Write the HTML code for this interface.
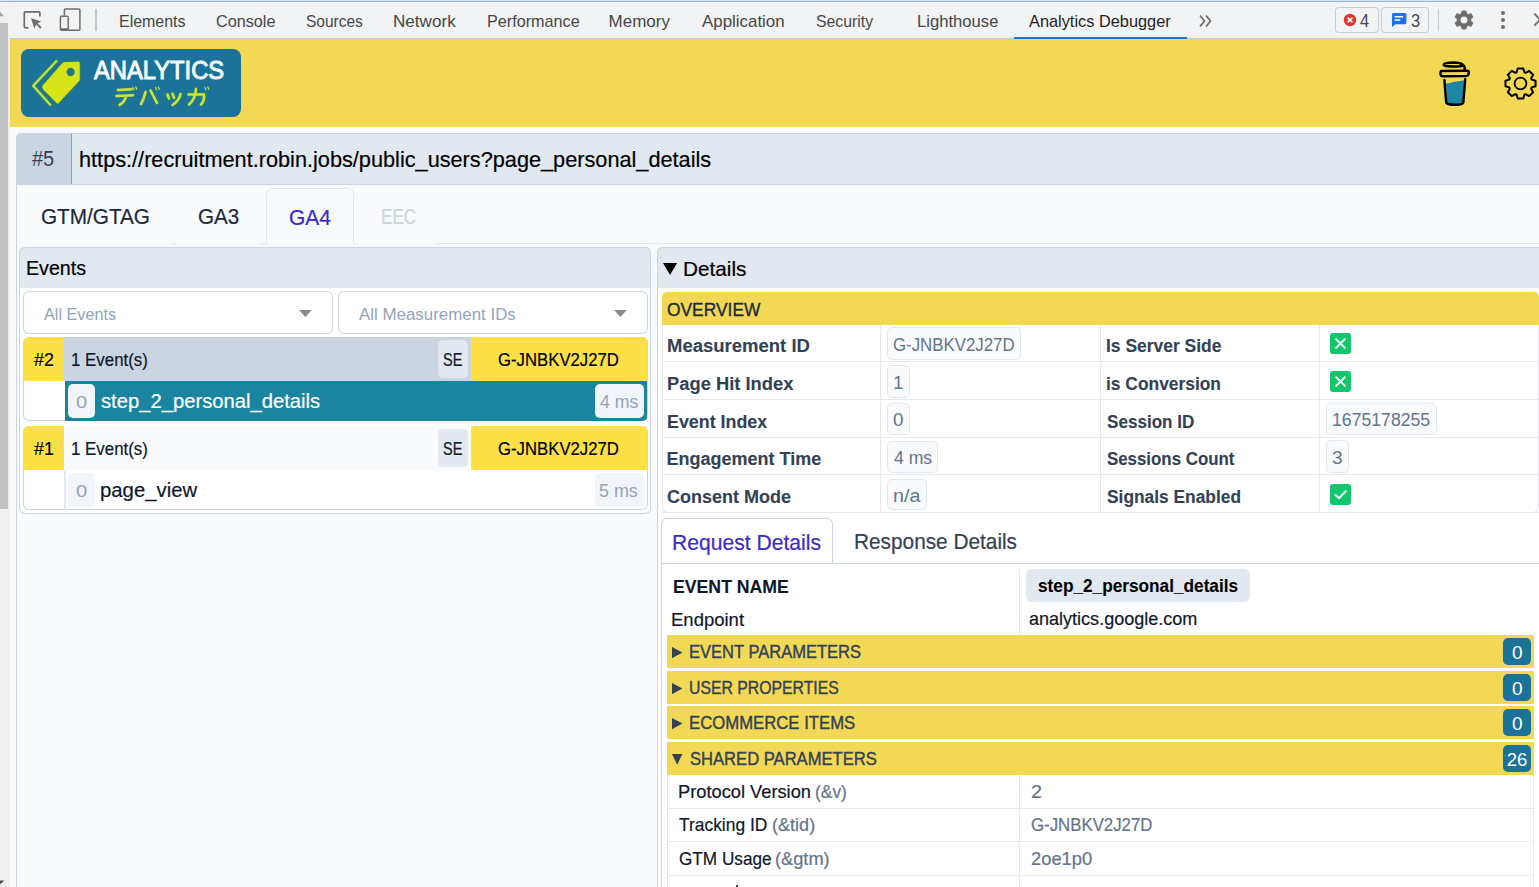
<!DOCTYPE html>
<html><head><meta charset="utf-8"><style>
html,body{margin:0;padding:0;}
body{width:1539px;height:887px;position:relative;overflow:hidden;background:#f8fafc;font-family:"Liberation Sans",sans-serif;}
.a{position:absolute;}
.t{position:absolute;white-space:nowrap;line-height:1;transform-origin:0 0;-webkit-text-stroke:0.2px currentColor;}
svg.a{overflow:visible;}
</style></head><body>
<div class="a" style="left:0px;top:0px;width:1539px;height:39px;background:#f1f3f4;"></div>
<div class="a" style="left:0px;top:0px;width:1539px;height:1px;background:#cfe0fa;"></div>
<div class="a" style="left:0px;top:1px;width:1539px;height:1px;background:#a6b3c9;"></div>
<div class="a" style="left:0px;top:38px;width:1539px;height:1px;background:#c9ccd1;"></div>
<div class="a" style="left:0px;top:2px;width:10px;height:885px;background:#f1f1f1;"></div>
<div class="a" style="left:0px;top:23px;width:8px;height:486px;background:#c1c1c1;"></div>
<svg class="a" style="left:0;top:10px" width="10" height="10"><path d="M0 1.8 L4.3 6.2 L0 6.2 Z" fill="#a3a3a3"/></svg>
<svg class="a" style="left:0;top:878px" width="10" height="10"><path d="M0 2.4 L4.4 2.4 L0 6.4 Z" fill="#505050"/></svg>
<svg class="a" style="left:20px;top:6px" width="30" height="28" viewBox="0 0 30 28">
<path d="M8.5 21.9 H5.6 a1.3 1.3 0 0 1 -1.3 -1.3 V7.2 a1.3 1.3 0 0 1 1.3 -1.3 H18.6 a1.3 1.3 0 0 1 1.3 1.3 V10.6" fill="none" stroke="#6e6e6e" stroke-width="1.7"/>
<path d="M11 12.2 L21.3 15.6 L17.6 17.2 L21.6 21.3 L20.2 22.7 L16.2 18.6 L14.4 22.4 Z" fill="#6e6e6e"/>
</svg>
<svg class="a" style="left:56px;top:6px" width="28" height="28" viewBox="0 0 28 28">
<path d="M8.4 9.4 V4 a1 1 0 0 1 1 -1 H22.9 a1 1 0 0 1 1 1 V23.2 a1 1 0 0 1 -1 1 H12.2" fill="none" stroke="#6e6e6e" stroke-width="1.5"/>
<rect x="4.4" y="10.2" width="7.8" height="14" rx="1" fill="none" stroke="#6e6e6e" stroke-width="1.5"/>
<rect x="4.4" y="22.2" width="7.8" height="2" fill="#6e6e6e"/>
</svg>
<div class="a" style="left:95px;top:9px;width:2px;height:22px;background:#c7cacf;"></div>
<div class="t" style="left:119.49px;top:12.61px;font-size:17.00px;color:#474747;-webkit-text-stroke:0px currentColor;transform:scaleX(0.9382);">Elements</div>
<div class="t" style="left:215.88px;top:12.61px;font-size:17.00px;color:#474747;-webkit-text-stroke:0px currentColor;transform:scaleX(0.9530);">Console</div>
<div class="t" style="left:305.70px;top:12.61px;font-size:17.00px;color:#474747;-webkit-text-stroke:0px currentColor;transform:scaleX(0.9118);">Sources</div>
<div class="t" style="left:392.90px;top:12.61px;font-size:17.00px;color:#474747;-webkit-text-stroke:0px currentColor;transform:scaleX(1.0053);">Network</div>
<div class="t" style="left:486.87px;top:12.61px;font-size:17.00px;color:#474747;-webkit-text-stroke:0px currentColor;transform:scaleX(0.9520);">Performance</div>
<div class="t" style="left:608.60px;top:12.61px;font-size:17.00px;color:#474747;-webkit-text-stroke:0px currentColor;">Memory</div>
<div class="t" style="left:702.27px;top:12.61px;font-size:17.00px;color:#474747;-webkit-text-stroke:0px currentColor;transform:scaleX(0.9935);">Application</div>
<div class="t" style="left:815.88px;top:12.61px;font-size:17.00px;color:#474747;-webkit-text-stroke:0px currentColor;transform:scaleX(0.9290);">Security</div>
<div class="t" style="left:916.64px;top:12.61px;font-size:17.00px;color:#474747;-webkit-text-stroke:0px currentColor;transform:scaleX(0.9786);">Lighthouse</div>
<div class="t" style="left:1029.17px;top:12.61px;font-size:17.00px;color:#1f1f1f;-webkit-text-stroke:0px currentColor;transform:scaleX(0.9612);">Analytics Debugger</div>
<div class="a" style="left:1014px;top:37px;width:173px;height:2px;background:#1a73e8;"></div>
<svg class="a" style="left:1196px;top:12px" width="20" height="18" viewBox="0 0 20 18">
<path d="M4 3.5 L8.5 9 L4 14.5 M10 3.5 L14.5 9 L10 14.5" fill="none" stroke="#6e6e6e" stroke-width="1.8"/></svg>
<div class="a" style="left:1335px;top:7px;width:44px;height:26px;background:#f1f3f4;box-shadow:inset 0 0 0 1px #cbcdd1;border-radius:4px;"></div>
<svg class="a" style="left:1343px;top:13px" width="14" height="14" viewBox="0 0 14 14">
<circle cx="7" cy="7" r="6.2" fill="#dc362e"/><path d="M4.6 4.6 L9.4 9.4 M9.4 4.6 L4.6 9.4" stroke="#fff" stroke-width="1.5"/></svg>
<div class="t" style="left:1360.43px;top:11.76px;font-size:18.00px;color:#474747;-webkit-text-stroke:0px currentColor;transform:scaleX(0.9040);">4</div>
<div class="a" style="left:1381px;top:7px;width:48px;height:26px;background:#f1f3f4;box-shadow:inset 0 0 0 1px #cbcdd1;border-radius:4px;"></div>
<svg class="a" style="left:1391px;top:12px" width="16" height="16" viewBox="0 0 16 16">
<path d="M2.2 1 H13.8 a1.6 1.6 0 0 1 1.6 1.6 V10.6 a1.6 1.6 0 0 1 -1.6 1.6 H4.4 L1 15 V2.6 a1.4 1.4 0 0 1 1.2 -1.6 Z" fill="#1a73e8"/>
<rect x="3.6" y="4" width="8.4" height="1.5" fill="#fff"/><rect x="3.6" y="7.3" width="5.6" height="1.5" fill="#fff"/></svg>
<div class="t" style="left:1411.17px;top:11.76px;font-size:18.00px;color:#474747;-webkit-text-stroke:0px currentColor;transform:scaleX(0.9139);">3</div>
<div class="a" style="left:1438px;top:9px;width:1px;height:22px;background:#c7cacf;"></div>
<svg class="a" style="left:1452px;top:8px" width="24" height="24" viewBox="0 0 24 24">
<path fill="#6e6e6e" d="M19.14 12.94c.04-.3.06-.61.06-.94 0-.32-.02-.64-.07-.94l2.03-1.58c.18-.14.23-.41.12-.61l-1.92-3.32c-.12-.22-.37-.29-.59-.22l-2.39.96c-.5-.38-1.03-.7-1.62-.94l-.36-2.54c-.04-.24-.24-.41-.48-.41h-3.84c-.24 0-.43.17-.47.41l-.36 2.54c-.59.24-1.13.57-1.62.94l-2.39-.96c-.22-.08-.47 0-.59.22L2.74 8.87c-.12.21-.08.47.12.61l2.03 1.58c-.05.3-.09.63-.09.94s.02.64.07.94l-2.03 1.58c-.18.14-.23.41-.12.61l1.92 3.32c.12.22.37.29.59.22l2.39-.96c.5.38 1.03.7 1.62.94l.36 2.54c.05.24.24.41.48.41h3.84c.24 0 .44-.17.47-.41l.36-2.54c.59-.24 1.13-.56 1.62-.94l2.39.96c.22.08.47 0 .59-.22l1.92-3.32c.12-.22.07-.47-.12-.61l-2.01-1.58zM12 15.6c-1.98 0-3.6-1.62-3.6-3.6s1.62-3.6 3.6-3.6 3.6 1.62 3.6 3.6-1.62 3.6-3.6 3.6z"/></svg>
<div class="a" style="left:1501.0px;top:11.0px;width:4.2px;height:4.2px;border-radius:50%;background:#6e6e6e"></div>
<div class="a" style="left:1501.0px;top:17.8px;width:4.2px;height:4.2px;border-radius:50%;background:#6e6e6e"></div>
<div class="a" style="left:1501.0px;top:24.7px;width:4.2px;height:4.2px;border-radius:50%;background:#6e6e6e"></div>
<svg class="a" style="left:1528px;top:10px" width="20" height="20" viewBox="0 0 20 20"><path d="M6.3 3.6 L18.3 15.6 M18.3 3.6 L6.3 15.6" stroke="#6e6e6e" stroke-width="2"/></svg>
<div class="a" style="left:10px;top:39px;width:1529px;height:88px;background:#f2d955;"></div>
<div class="a" style="left:21px;top:49px;width:220px;height:68px;background:#1b7399;border-radius:8px;"></div>
<svg class="a" style="left:21px;top:49px" width="220" height="68" viewBox="21 49 220 68">
<path d="M56.3 61.2 L33.2 85.8 L50.2 104.7" fill="none" stroke="#2f7f66" stroke-width="4.4" stroke-linejoin="round" stroke-linecap="round"/>
<path d="M56.3 61.2 L33.2 85.8 L50.2 104.7" fill="none" stroke="#bde352" stroke-width="2.4" stroke-linejoin="round" stroke-linecap="round"/>
<path d="M42.3 85.2 L61.6 63.2 Q62.8 61.8 64.4 61.7 L78.2 60.9 Q80.3 61 80.3 63.3 L80.3 79.6 Q80.3 80.6 79.6 81.3 L59 103.4 Q57.6 104.9 56.2 103.5 L42.6 89.6 Q40.8 87.4 42.3 85.2 Z" fill="#d8e41a" stroke="#2f7f66" stroke-width="1.1"/>
<circle cx="70.6" cy="72" r="3.6" fill="#1b7399" stroke="#2f7f66" stroke-width="1.2"/>
</svg>
<div class="t" style="left:94.25px;top:57.29px;font-size:26.00px;color:#f4fbff;-webkit-text-stroke:1.0px currentColor;transform:scaleX(0.9128);">ANALYTICS</div>
<svg class="a" style="left:110px;top:84px" width="100" height="26" viewBox="110 84 100 26">
<g fill="none" stroke-linecap="round" stroke-linejoin="round">
<path d="M118 90 L131.5 89.3 M116.5 96 L133 95.3 M126 96 Q125 102 119.5 105 M145.5 92 Q144 99 141 104 M150.5 90.5 Q154 97 157 103 M167.5 94.5 L169 98.5 M172.5 93.8 L174 97.8 M180.5 94 Q179 101 172.5 105 M188.5 94.5 L204 94.5 Q204.5 101 201 104.5 M196 89 Q195.5 99 189 104.5" stroke="#3b8a63" stroke-width="3.8"/>
<path d="M118 90 L131.5 89.3 M116.5 96 L133 95.3 M126 96 Q125 102 119.5 105 M145.5 92 Q144 99 141 104 M150.5 90.5 Q154 97 157 103 M167.5 94.5 L169 98.5 M172.5 93.8 L174 97.8 M180.5 94 Q179 101 172.5 105 M188.5 94.5 L204 94.5 Q204.5 101 201 104.5 M196 89 Q195.5 99 189 104.5" stroke="#cde43e" stroke-width="2.5"/>
<path d="M133 87.5 L134 89.8 M135.8 87 L136.8 89.3 M155.5 87.5 L156.5 89.8 M158.3 87 L159.3 89.3 M205 87.5 L206 89.8 M207.8 87 L208.8 89.3" stroke="#b8dd5a" stroke-width="1.3"/>
</g></svg>
<svg class="a" style="left:1436px;top:58px" width="38" height="50" viewBox="1436 58 38 50">
<path d="M1446 83.8 Q1455 81.6 1463.8 80.6 L1462.4 102.6 Q1462 104.2 1454.8 104.2 Q1447.6 104.2 1447.2 102.6 Z" fill="#1b86a5"/>
<g fill="none" stroke="#000" stroke-width="2.5" stroke-linecap="round" stroke-linejoin="round">
<path d="M1444.4 80 L1446.2 102.4 Q1446.8 104.8 1454.8 104.8 Q1462.8 104.8 1463.3 102.4 L1465.2 79.2"/>
<path d="M1441.5 70.9 L1467.4 70.7 Q1469.1 70.9 1468.8 73.1 Q1468.4 75.7 1466.5 75.9 L1442.6 76.3 Q1440.6 76.3 1440.5 73.5 Q1440.5 71 1441.5 70.9 Z"/>
<path d="M1464.8 70.2 Q1465.4 62.8 1454.5 62.5 Q1444.2 62.5 1443.8 64.6 Q1443.6 66.6 1454 66.6 Q1460.8 66.6 1462.6 65.6"/>
</g></svg>
<svg class="a" style="left:1501.9px;top:64.8px" width="37" height="37" viewBox="0 0 37 37">
<path fill="none" stroke="#000" stroke-width="2" stroke-linejoin="round" d="M14.63 7.25 L15.71 3.46 L21.29 3.46 L22.37 7.25 L23.72 7.80 L27.17 5.89 L31.11 9.83 L29.20 13.28 L29.75 14.63 L33.54 15.71 L33.54 21.29 L29.75 22.37 L29.20 23.72 L31.11 27.17 L27.17 31.11 L23.72 29.20 L22.37 29.75 L21.29 33.54 L15.71 33.54 L14.63 29.75 L13.28 29.20 L9.83 31.11 L5.89 27.17 L7.80 23.72 L7.25 22.37 L3.46 21.29 L3.46 15.71 L7.25 14.63 L7.80 13.28 L5.89 9.83 L9.83 5.89 L13.28 7.80 Z"/>
<circle cx="18.5" cy="18.5" r="5.9" fill="none" stroke="#000" stroke-width="1.9"/></svg>
<div class="a" style="left:10px;top:127px;width:1529px;height:760px;background:#f8fafc;"></div>
<div class="a" style="left:16px;top:184px;width:1px;height:703px;background:#cbd5e1;"></div>
<div class="a" style="left:16px;top:133px;width:1523px;height:51px;background:#e2e8f0;border-top-left-radius:5px;"></div>
<div class="a" style="left:16px;top:133px;width:55px;height:51px;background:#cbd5e1;border-top-left-radius:5px;"></div>
<div class="a" style="left:71px;top:133px;width:1px;height:51px;background:#94a3b8;"></div>
<div class="a" style="left:16px;top:184px;width:1523px;height:1px;background:#cbd5e1;"></div>
<div class="a" style="left:21px;top:133px;width:1518px;height:1px;background:#cbd5e1;"></div>
<div class="t" style="left:32.41px;top:147.95px;font-size:22.50px;color:#334155;-webkit-text-stroke:0px currentColor;transform:scaleX(0.8881);">#5</div>
<div class="t" style="left:79.29px;top:149.04px;font-size:22.40px;color:#000;transform:scaleX(0.9693);">https://recruitment.robin.jobs/public_users?page_personal_details</div>
<div class="a" style="left:266px;top:188px;width:88px;height:56px;border:1px solid #e2e8f0;border-bottom:none;box-sizing:border-box;border-top-left-radius:6px;border-top-right-radius:6px;background:#f8fafc;"></div>
<div class="a" style="left:261px;top:243px;width:6px;height:1px;background:#e2e8f0;"></div>
<div class="a" style="left:353px;top:243px;width:6px;height:1px;background:#e2e8f0;"></div>
<div class="a" style="left:438px;top:243px;width:1101px;height:1px;background:#e2e8f0;"></div>
<div class="a" style="left:171px;top:243px;width:5px;height:1px;background:#e2e8f0;"></div>
<div class="t" style="left:40.76px;top:206.15px;font-size:21.80px;color:#1e293b;transform:scaleX(0.9507);">GTM/GTAG</div>
<div class="t" style="left:197.56px;top:206.15px;font-size:21.80px;color:#1e293b;transform:scaleX(0.9454);">GA3</div>
<div class="t" style="left:288.95px;top:207.15px;font-size:21.80px;color:#3728c9;transform:scaleX(0.9621);">GA4</div>
<div class="t" style="left:381.20px;top:205.95px;font-size:21.80px;color:#cbd5e1;transform:scaleX(0.7842);">EEC</div>
<div class="a" style="left:19px;top:247px;width:632px;height:267px;background:#fff;box-shadow:inset 0 0 0 1px #cbd5e1;border-radius:6px;"></div>
<div class="a" style="left:19px;top:247px;width:632px;height:41px;background:#e2e8f0;box-shadow:inset 0 0 0 1px #cbd5e1;border-top-left-radius:6px;border-top-right-radius:6px;"></div>
<div class="a" style="left:20px;top:287px;width:630px;height:1px;background:#e2e8f0;"></div>
<div class="t" style="left:25.59px;top:258.35px;font-size:20.50px;color:#000;transform:scaleX(0.9577);">Events</div>
<div class="a" style="left:23px;top:291px;width:310px;height:43px;background:#fff;box-shadow:inset 0 0 0 1px #d1d5db;border-radius:6px;"></div>
<div class="a" style="left:338px;top:291px;width:310px;height:43px;background:#fff;box-shadow:inset 0 0 0 1px #d1d5db;border-radius:6px;"></div>
<div class="t" style="left:43.67px;top:306.36px;font-size:17.30px;color:#94a3b8;-webkit-text-stroke:0px currentColor;transform:scaleX(0.9388);">All Events</div>
<div class="t" style="left:358.77px;top:306.36px;font-size:17.30px;color:#94a3b8;-webkit-text-stroke:0px currentColor;transform:scaleX(0.9775);">All Measurement IDs</div>
<svg class="a" style="left:299px;top:310px" width="13" height="7"><path d="M0 0 H12.8 L6.4 7 Z" fill="#8a8a8a"/></svg>
<svg class="a" style="left:614px;top:310px" width="13" height="7"><path d="M0 0 H12.8 L6.4 7 Z" fill="#8a8a8a"/></svg>
<div class="a" style="left:23px;top:337px;width:625px;height:84px;border-radius:6px;overflow:hidden;box-shadow:inset 0 0 0 1px #cbd5e1;background:#fff"><div class="a" style="left:1px;top:0;width:40px;height:44px;background:#fde047"></div><div class="a" style="left:41px;top:0;width:407px;height:44px;background:#cbd5e1"></div><div class="a" style="left:448px;top:0;width:176px;height:44px;background:#fde047"></div><div class="a" style="left:42px;top:44px;width:582px;height:40px;background:#1a84a1"></div></div>
<div class="a" style="left:438px;top:340px;width:30px;height:38px;background:#e2e8f0;border-radius:5px;"></div>
<div class="a" style="left:68px;top:384px;width:27px;height:34px;background:#f1f5f9;border-radius:5px;"></div>
<div class="a" style="left:595px;top:384px;width:49px;height:34px;background:#f1f5f9;border-radius:5px;"></div>
<div class="a" style="left:23px;top:426px;width:625px;height:84px;border-radius:6px;overflow:hidden;box-shadow:inset 0 0 0 1px #cbd5e1;background:#fff"><div class="a" style="left:1px;top:0;width:40px;height:44px;background:#fde047"></div><div class="a" style="left:41px;top:0;width:407px;height:44px;background:#f8fafc"></div><div class="a" style="left:448px;top:0;width:176px;height:44px;background:#fde047"></div><div class="a" style="left:41px;top:44px;width:1px;height:40px;background:#e2e8f0"></div></div>
<div class="a" style="left:65px;top:470px;width:1px;height:39px;background:#e2e8f0;"></div>
<div class="a" style="left:438px;top:429px;width:30px;height:38px;background:#e2e8f0;border-radius:5px;"></div>
<div class="a" style="left:68px;top:473px;width:27px;height:34px;background:#f1f5f9;border-radius:5px;"></div>
<div class="a" style="left:595px;top:473px;width:49px;height:34px;background:#f1f5f9;border-radius:5px;"></div>
<div class="t" style="left:34.22px;top:350.76px;font-size:18.00px;color:#000;transform:scaleX(0.9928);">#2</div>
<div class="t" style="left:71.41px;top:350.76px;font-size:18.00px;color:#0f172a;transform:scaleX(0.9379);">1 Event(s)</div>
<div class="t" style="left:443.04px;top:350.76px;font-size:18.00px;color:#0f172a;transform:scaleX(0.8072);">SE</div>
<div class="t" style="left:497.96px;top:350.76px;font-size:18.00px;color:#000;transform:scaleX(0.9300);">G-JNBKV2J27D</div>
<div class="t" style="left:75.82px;top:393.61px;font-size:17.00px;color:#94a3b8;-webkit-text-stroke:0px currentColor;transform:scaleX(1.1813);">0</div>
<div class="t" style="left:100.84px;top:390.65px;font-size:20.50px;color:#fff;transform:scaleX(0.9862);">step_2_personal_details</div>
<div class="t" style="left:599.79px;top:392.76px;font-size:18.00px;color:#94a3b8;-webkit-text-stroke:0px currentColor;transform:scaleX(0.9857);">4 ms</div>
<div class="t" style="left:34.22px;top:439.76px;font-size:18.00px;color:#000;transform:scaleX(0.9914);">#1</div>
<div class="t" style="left:71.41px;top:439.76px;font-size:18.00px;color:#0f172a;transform:scaleX(0.9379);">1 Event(s)</div>
<div class="t" style="left:443.04px;top:439.76px;font-size:18.00px;color:#0f172a;transform:scaleX(0.8072);">SE</div>
<div class="t" style="left:497.96px;top:439.76px;font-size:18.00px;color:#000;transform:scaleX(0.9300);">G-JNBKV2J27D</div>
<div class="t" style="left:75.82px;top:482.61px;font-size:17.00px;color:#94a3b8;-webkit-text-stroke:0px currentColor;transform:scaleX(1.1813);">0</div>
<div class="t" style="left:100.09px;top:479.65px;font-size:20.50px;color:#0f172a;transform:scaleX(0.9912);">page_view</div>
<div class="t" style="left:599.48px;top:481.76px;font-size:18.00px;color:#94a3b8;-webkit-text-stroke:0px currentColor;transform:scaleX(0.9937);">5 ms</div>
<div class="a" style="left:657px;top:247px;width:903px;height:653px;background:#fff;box-shadow:inset 0 0 0 1px #cbd5e1;border-radius:6px;"></div>
<div class="a" style="left:657px;top:247px;width:903px;height:41px;background:#e2e8f0;box-shadow:inset 0 0 0 1px #cbd5e1;border-top-left-radius:6px;"></div>
<div class="a" style="left:658px;top:287px;width:881px;height:1px;background:#e2e8f0;"></div>
<svg class="a" style="left:663px;top:263px" width="15" height="12"><path d="M0 0 H14.1 L7.05 12 Z" fill="#000"/></svg>
<div class="t" style="left:683.10px;top:257.92px;font-size:21.00px;color:#000;transform:scaleX(0.9885);">Details</div>
<div class="a" style="left:662px;top:292px;width:877px;height:221px;background:#fff;box-shadow:inset 0 0 0 1px #e5e7eb;border-radius:6px;"></div>
<div class="a" style="left:662px;top:292px;width:877px;height:33px;background:#f2d955;border-top-left-radius:5px;border-top-right-radius:5px;"></div>
<div class="t" style="left:666.98px;top:300.96px;font-size:18.00px;color:#1e293b;-webkit-text-stroke:0.35px currentColor;transform:scaleX(0.9658);">OVERVIEW</div>
<div class="a" style="left:662px;top:361px;width:877px;height:1px;background:#e5e7eb;"></div>
<div class="a" style="left:662px;top:399px;width:877px;height:1px;background:#e5e7eb;"></div>
<div class="a" style="left:662px;top:437px;width:877px;height:1px;background:#e5e7eb;"></div>
<div class="a" style="left:662px;top:474px;width:877px;height:1px;background:#e5e7eb;"></div>
<div class="a" style="left:662px;top:512px;width:877px;height:1px;background:#e5e7eb;"></div>
<div class="a" style="left:880px;top:325px;width:1px;height:187px;background:#e5e7eb;"></div>
<div class="a" style="left:1100px;top:325px;width:1px;height:187px;background:#e5e7eb;"></div>
<div class="a" style="left:1319px;top:325px;width:1px;height:187px;background:#e5e7eb;"></div>
<div class="t" style="left:666.56px;top:336.86px;font-size:18.00px;color:#334155;font-weight:bold;-webkit-text-stroke:0.1px currentColor;transform:scaleX(1.0278);">Measurement ID</div>
<div class="t" style="left:666.57px;top:374.56px;font-size:18.00px;color:#334155;font-weight:bold;-webkit-text-stroke:0.1px currentColor;transform:scaleX(1.0188);">Page Hit Index</div>
<div class="t" style="left:666.61px;top:413.06px;font-size:18.00px;color:#334155;font-weight:bold;-webkit-text-stroke:0.1px currentColor;transform:scaleX(0.9920);">Event Index</div>
<div class="t" style="left:666.59px;top:450.06px;font-size:18.00px;color:#334155;font-weight:bold;-webkit-text-stroke:0.1px currentColor;">Engagement Time</div>
<div class="t" style="left:667.06px;top:487.86px;font-size:18.00px;color:#334155;font-weight:bold;-webkit-text-stroke:0.1px currentColor;">Consent Mode</div>
<div class="t" style="left:1106.43px;top:336.86px;font-size:18.00px;color:#334155;font-weight:bold;-webkit-text-stroke:0.1px currentColor;transform:scaleX(0.9688);">Is Server Side</div>
<div class="t" style="left:1106.39px;top:374.56px;font-size:18.00px;color:#334155;font-weight:bold;-webkit-text-stroke:0.1px currentColor;transform:scaleX(0.9661);">is Conversion</div>
<div class="t" style="left:1107.11px;top:413.06px;font-size:18.00px;color:#334155;font-weight:bold;-webkit-text-stroke:0.1px currentColor;transform:scaleX(0.9487);">Session ID</div>
<div class="t" style="left:1107.11px;top:450.06px;font-size:18.00px;color:#334155;font-weight:bold;-webkit-text-stroke:0.1px currentColor;transform:scaleX(0.9365);">Sessions Count</div>
<div class="t" style="left:1107.10px;top:487.86px;font-size:18.00px;color:#334155;font-weight:bold;-webkit-text-stroke:0.1px currentColor;transform:scaleX(0.9641);">Signals Enabled</div>
<div class="a" style="left:887px;top:327px;width:134px;height:33px;background:#f8fafc;box-shadow:inset 0 0 0 1px #e2e8f0;border-radius:5px;"></div>
<div class="t" style="left:892.95px;top:335.76px;font-size:18.00px;color:#64748b;-webkit-text-stroke:0px currentColor;transform:scaleX(0.9354);">G-JNBKV2J27D</div>
<div class="a" style="left:887px;top:365px;width:23px;height:33px;background:#f8fafc;box-shadow:inset 0 0 0 1px #e2e8f0;border-radius:5px;"></div>
<div class="t" style="left:892.59px;top:373.56px;font-size:18.00px;color:#64748b;-webkit-text-stroke:0px currentColor;transform:scaleX(1.0308);">1</div>
<div class="a" style="left:887px;top:403px;width:23px;height:32px;background:#f8fafc;box-shadow:inset 0 0 0 1px #e2e8f0;border-radius:5px;"></div>
<div class="t" style="left:893.26px;top:411.46px;font-size:18.00px;color:#64748b;-webkit-text-stroke:0px currentColor;transform:scaleX(1.0459);">0</div>
<div class="a" style="left:887px;top:441px;width:51px;height:32px;background:#f8fafc;box-shadow:inset 0 0 0 1px #e2e8f0;border-radius:5px;"></div>
<div class="t" style="left:893.60px;top:449.06px;font-size:18.00px;color:#64748b;-webkit-text-stroke:0px currentColor;transform:scaleX(0.9751);">4 ms</div>
<div class="a" style="left:887px;top:479px;width:40px;height:31px;background:#f8fafc;box-shadow:inset 0 0 0 1px #e2e8f0;border-radius:5px;"></div>
<div class="t" style="left:892.70px;top:486.76px;font-size:18.00px;color:#64748b;-webkit-text-stroke:0px currentColor;transform:scaleX(1.0912);">n/a</div>
<div class="a" style="left:1326px;top:403px;width:111px;height:32px;background:#f8fafc;box-shadow:inset 0 0 0 1px #e2e8f0;border-radius:5px;"></div>
<div class="t" style="left:1332.46px;top:410.86px;font-size:18.00px;color:#64748b;-webkit-text-stroke:0px currentColor;transform:scaleX(0.9808);">1675178255</div>
<div class="a" style="left:1326px;top:440px;width:23px;height:33px;background:#f8fafc;box-shadow:inset 0 0 0 1px #e2e8f0;border-radius:5px;"></div>
<div class="t" style="left:1332.28px;top:448.76px;font-size:18.00px;color:#64748b;-webkit-text-stroke:0px currentColor;transform:scaleX(1.0545);">3</div>
<div class="a" style="left:1330px;top:333.3px;width:21px;height:20.5px;background:#12c76b;border-radius:3px;"></div>
<svg class="a" style="left:1330px;top:333.3px" width="21" height="21"><path d="M5.6 5.6 L15.4 15.4 M15.4 5.6 L5.6 15.4" stroke="#fff" stroke-width="1.9"/></svg>
<div class="a" style="left:1330px;top:371.2px;width:21px;height:20.5px;background:#12c76b;border-radius:3px;"></div>
<svg class="a" style="left:1330px;top:371.2px" width="21" height="21"><path d="M5.6 5.6 L15.4 15.4 M15.4 5.6 L5.6 15.4" stroke="#fff" stroke-width="1.9"/></svg>
<div class="a" style="left:1330px;top:484.3px;width:21px;height:20.5px;background:#12c76b;border-radius:3px;"></div>
<svg class="a" style="left:1330px;top:484.3px" width="21" height="21"><path d="M5 10.5 L9 14.2 L16.2 6.8" fill="none" stroke="#fff" stroke-width="2"/></svg>
<div class="a" style="left:661px;top:518px;width:172px;height:46px;background:#fff;box-shadow:inset 0 0 0 1px #cbd5e1;border-top-left-radius:6px;border-top-right-radius:6px;"></div>
<div class="a" style="left:661px;top:563px;width:878px;height:1px;background:#cbd5e1;"></div>
<div class="a" style="left:661px;top:563px;width:1px;height:324px;background:#cbd5e1;"></div>
<div class="t" style="left:672.07px;top:531.55px;font-size:21.80px;color:#3a2bcc;transform:scaleX(0.9682);">Request Details</div>
<div class="t" style="left:854.19px;top:530.85px;font-size:21.80px;color:#334155;transform:scaleX(0.9543);">Response Details</div>
<div class="t" style="left:672.62px;top:578.34px;font-size:18.50px;color:#0f172a;font-weight:bold;-webkit-text-stroke:0.1px currentColor;transform:scaleX(0.9553);">EVENT NAME</div>
<div class="a" style="left:1019px;top:569px;width:1px;height:66px;background:#e5e7eb;"></div>
<div class="a" style="left:1026px;top:569px;width:224px;height:32.5px;background:#e2e8f0;border-radius:6px;"></div>
<div class="t" style="left:1037.89px;top:576.74px;font-size:18.50px;color:#000;font-weight:bold;-webkit-text-stroke:0.1px currentColor;transform:scaleX(0.9311);">step_2_personal_details</div>
<div class="t" style="left:671.28px;top:609.92px;font-size:19.00px;color:#0f172a;transform:scaleX(0.9739);">Endpoint</div>
<div class="t" style="left:1028.83px;top:608.92px;font-size:19.00px;color:#0f172a;transform:scaleX(0.9488);">analytics.google.com</div>
<div class="a" style="left:667px;top:635px;width:867px;height:33px;background:#f2d955;"></div>
<svg class="a" style="left:672px;top:647.4px" width="11" height="12"><path d="M0 0 V11.2 L10.4 5.6 Z" fill="#334155"/></svg>
<div class="t" style="left:689.34px;top:643.36px;font-size:18.00px;color:#334155;-webkit-text-stroke:0.4px currentColor;transform:scaleX(0.9180);">EVENT PARAMETERS</div>
<div class="a" style="left:1503px;top:638px;width:28px;height:27px;background:#1b7399;border-radius:5px;"></div>
<div class="t" style="left:1511.96px;top:643.54px;font-size:18.50px;color:#fff;-webkit-text-stroke:0px currentColor;transform:scaleX(1.0290);">0</div>
<div class="a" style="left:667px;top:671px;width:867px;height:33px;background:#f2d955;"></div>
<svg class="a" style="left:672px;top:683.4px" width="11" height="12"><path d="M0 0 V11.2 L10.4 5.6 Z" fill="#334155"/></svg>
<div class="t" style="left:689.48px;top:679.36px;font-size:18.00px;color:#334155;-webkit-text-stroke:0.4px currentColor;transform:scaleX(0.8777);">USER PROPERTIES</div>
<div class="a" style="left:1503px;top:674px;width:28px;height:27px;background:#1b7399;border-radius:5px;"></div>
<div class="t" style="left:1511.96px;top:679.54px;font-size:18.50px;color:#fff;-webkit-text-stroke:0px currentColor;transform:scaleX(1.0290);">0</div>
<div class="a" style="left:667px;top:706px;width:867px;height:33px;background:#f2d955;"></div>
<svg class="a" style="left:672px;top:718.4px" width="11" height="12"><path d="M0 0 V11.2 L10.4 5.6 Z" fill="#334155"/></svg>
<div class="t" style="left:689.33px;top:714.36px;font-size:18.00px;color:#334155;-webkit-text-stroke:0.4px currentColor;transform:scaleX(0.9286);">ECOMMERCE ITEMS</div>
<div class="a" style="left:1503px;top:709px;width:28px;height:27px;background:#1b7399;border-radius:5px;"></div>
<div class="t" style="left:1511.96px;top:714.54px;font-size:18.50px;color:#fff;-webkit-text-stroke:0px currentColor;transform:scaleX(1.0290);">0</div>
<div class="a" style="left:667px;top:742px;width:867px;height:33px;background:#f2d955;"></div>
<svg class="a" style="left:672px;top:753.5px" width="11" height="11"><path d="M0 0 H10.4 L5.2 10.8 Z" fill="#334155"/></svg>
<div class="t" style="left:689.95px;top:750.36px;font-size:18.00px;color:#334155;-webkit-text-stroke:0.4px currentColor;transform:scaleX(0.9216);">SHARED PARAMETERS</div>
<div class="a" style="left:1503px;top:745px;width:28px;height:27px;background:#1b7399;border-radius:5px;"></div>
<div class="t" style="left:1506.77px;top:750.54px;font-size:18.50px;color:#fff;-webkit-text-stroke:0px currentColor;">26</div>
<div class="a" style="left:667px;top:775px;width:867px;height:112px;background:#fff;"></div>
<div class="a" style="left:667px;top:775px;width:1px;height:112px;background:#e5e7eb;"></div>
<div class="a" style="left:1533px;top:775px;width:1px;height:112px;background:#e5e7eb;"></div>
<div class="a" style="left:1019px;top:775px;width:1px;height:112px;background:#e5e7eb;"></div>
<div class="a" style="left:667px;top:808px;width:867px;height:1px;background:#e5e7eb;"></div>
<div class="a" style="left:667px;top:841px;width:867px;height:1px;background:#e5e7eb;"></div>
<div class="a" style="left:667px;top:875px;width:867px;height:1px;background:#e5e7eb;"></div>
<div class="t" style="left:678.30px;top:781.92px;font-size:19.00px;color:#0f172a;transform:scaleX(0.9612);">Protocol Version</div>
<div class="t" style="left:815.22px;top:781.92px;font-size:19.00px;color:#64748b;transform:scaleX(0.9146);">(&amp;v)</div>
<div class="t" style="left:1030.51px;top:782.84px;font-size:18.50px;color:#64748b;transform:scaleX(1.0678);">2</div>
<div class="t" style="left:679.41px;top:815.22px;font-size:19.00px;color:#0f172a;transform:scaleX(0.9159);">Tracking ID</div>
<div class="t" style="left:772.38px;top:815.22px;font-size:19.00px;color:#64748b;transform:scaleX(0.9503);">(&amp;tid)</div>
<div class="t" style="left:1030.65px;top:816.14px;font-size:18.50px;color:#64748b;transform:scaleX(0.9087);">G-JNBKV2J27D</div>
<div class="t" style="left:678.94px;top:848.92px;font-size:19.00px;color:#0f172a;transform:scaleX(0.9044);">GTM Usage</div>
<div class="t" style="left:775.37px;top:848.92px;font-size:19.00px;color:#64748b;transform:scaleX(0.9589);">(&amp;gtm)</div>
<div class="t" style="left:1030.58px;top:849.84px;font-size:18.50px;color:#64748b;transform:scaleX(0.9903);">2oe1p0</div>
<div class="a" style="left:736px;top:885px;width:2px;height:2px;background:#334155;"></div>
</body></html>
